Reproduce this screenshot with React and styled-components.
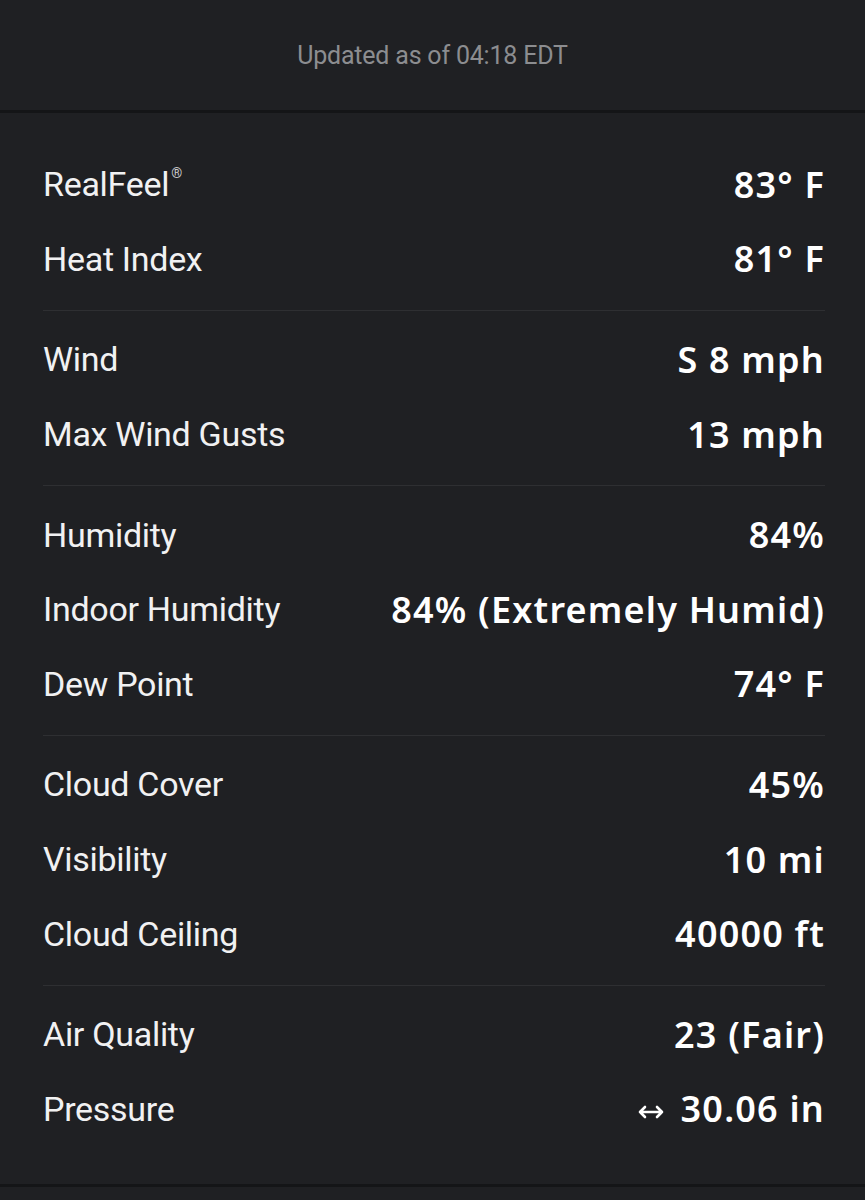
import React from 'react';
import styled, { createGlobalStyle } from 'styled-components';

const GlobalStyle = createGlobalStyle`
  html, body {
    margin: 0;
    padding: 0;
    background: #1f2023;
  }
  body {
    font-family: Roboto, "Noto Sans", sans-serif;
    -webkit-font-smoothing: antialiased;
  }
`;

const Page = styled.div`
  width: 865px;
  min-height: 1200px;
  background: #1f2023;
  display: flex;
  flex-direction: column;
`;

const Header = styled.div`
  height: 110px;
  display: flex;
  align-items: center;
  justify-content: center;
  border-bottom: 3px solid #141517;
  color: #8c8d90;
  font-size: 25px;
  letter-spacing: -0.2px;
`;

const Body = styled.div`
  padding: 23px 40px 24px 43px;
  border-bottom: 3px solid #141517;
`;

const Group = styled.div`
  padding: 11px 0 14px;
  border-bottom: 1px solid #2e2f32;

  &:last-child {
    border-bottom: none;
  }
`;

const Row = styled.div`
  height: 74.6px;
  display: flex;
  align-items: center;
  justify-content: space-between;
`;

const Label = styled.span`
  color: #f1f1f2;
  font-size: 34px;
  font-weight: 400;
  letter-spacing: -0.3px;

  sup {
    font-size: 14px;
    margin-left: 2px;
    vertical-align: 18px;
    color: #c8c8ca;
  }
`;

const Value = styled.span`
  color: #ffffff;
  font-family: "Noto Sans", Roboto, sans-serif;
  font-size: 36px;
  font-weight: 600;
  letter-spacing: 1.2px;
  display: flex;
  align-items: center;
  gap: 17px;
`;

const ArrowIcon = () => (
  <svg width="26" height="14" viewBox="0 0 26 14" fill="none" style={{ marginTop: 6 }}>
    <path d="M2 7h22M7 2L2 7l5 5M19 2l5 5-5 5" stroke="#ffffff" strokeWidth="2.6" strokeLinecap="round" strokeLinejoin="round" />
  </svg>
);

const groups = [
  [
    { label: 'RealFeel', reg: true, value: '83° F' },
    { label: 'Heat Index', value: '81° F' },
  ],
  [
    { label: 'Wind', value: 'S 8 mph' },
    { label: 'Max Wind Gusts', value: '13 mph' },
  ],
  [
    { label: 'Humidity', value: '84%' },
    { label: 'Indoor Humidity', value: '84% (Extremely Humid)' },
    { label: 'Dew Point', value: '74° F' },
  ],
  [
    { label: 'Cloud Cover', value: '45%' },
    { label: 'Visibility', value: '10 mi' },
    { label: 'Cloud Ceiling', value: '40000 ft' },
  ],
  [
    { label: 'Air Quality', value: '23 (Fair)' },
    { label: 'Pressure', value: '30.06 in', arrow: true },
  ],
];

export default function App() {
  return (
    <Page>
      <GlobalStyle />
      <Header>Updated as of 04:18 EDT</Header>
      <Body>
        {groups.map((rows, gi) => (
          <Group key={gi}>
            {rows.map((row) => (
              <Row key={row.label}>
                <Label>
                  {row.label}
                  {row.reg && <sup>®</sup>}
                </Label>
                <Value>
                  {row.arrow && <ArrowIcon />}
                  {row.value}
                </Value>
              </Row>
            ))}
          </Group>
        ))}
      </Body>
    </Page>
  );
}
